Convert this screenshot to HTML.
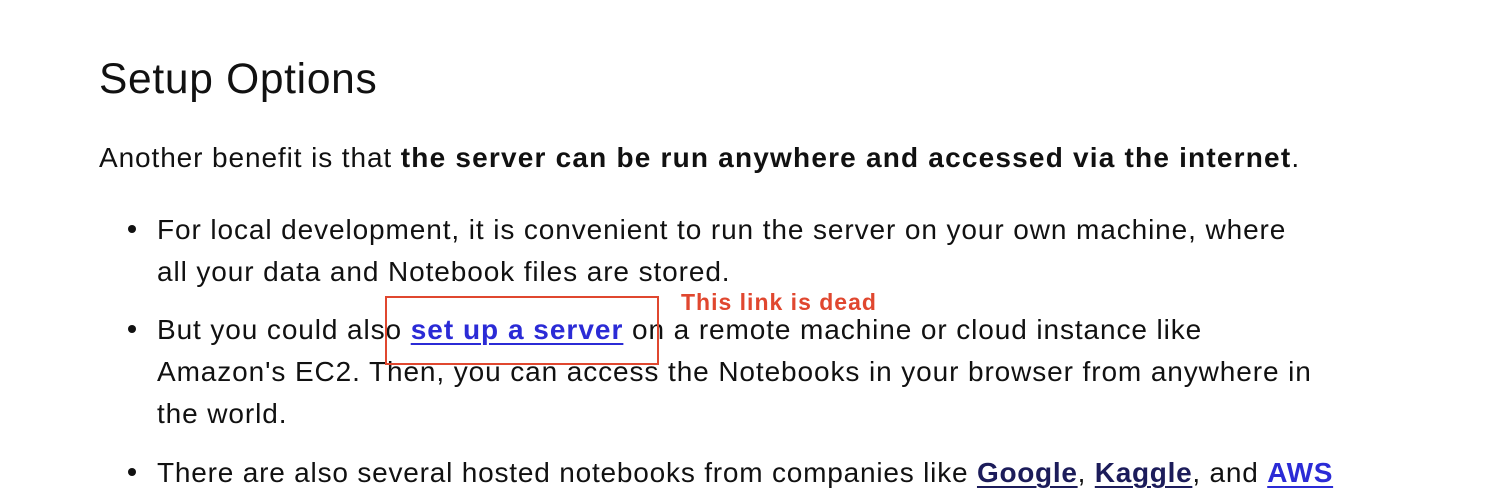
<!DOCTYPE html>
<html><head><meta charset="utf-8"><style>
html,body{margin:0;padding:0;background:#fff;width:1498px;height:500px;overflow:hidden;}
body{font-family:"Liberation Sans","DejaVu Sans",sans-serif;color:#111;}
.l{position:absolute;font-size:28px;letter-spacing:0.9px;white-space:nowrap;line-height:1;}
h1{position:absolute;left:99px;top:59px;margin:0;font-weight:400;font-size:42.5px;line-height:1;letter-spacing:0.7px;}
b{font-weight:700;letter-spacing:1.2px;}
a{font-weight:700;letter-spacing:0.7px;text-decoration:underline;text-decoration-thickness:2px;text-underline-offset:4px;}
.blue{color:#2b2bd6;}
.navy{color:#1c1c5a;}
.dot{position:absolute;width:8px;height:8px;border-radius:50%;background:#111;}
.box{position:absolute;left:385px;top:296px;width:274px;height:69px;border:2px solid #e0472f;box-sizing:border-box;}
.note{position:absolute;left:681px;top:289px;color:#e0472f;font-weight:700;font-size:23px;letter-spacing:1px;white-space:nowrap;}
</style></head><body>
<h1>Setup Options</h1>
<div class="l" style="left:99px;top:144px">Another benefit is that <b>the server can be run anywhere and accessed via the internet</b>.</div>
<div class="dot" style="left:128px;top:225px"></div>
<div class="l" style="left:157px;top:216px">For local development, it is convenient to run the server on your own machine, where</div>
<div class="l" style="left:157px;top:258px">all your data and Notebook files are stored.</div>
<div class="dot" style="left:128px;top:325px"></div>
<div class="l" style="left:157px;top:316px">But you could also <a class="blue" style="letter-spacing:1px">set up a server</a> on a remote machine or cloud instance like</div>
<div class="l" style="left:157px;top:358px">Amazon's EC2. Then, you can access the Notebooks in your browser from anywhere in</div>
<div class="l" style="left:157px;top:400px">the world.</div>
<div class="dot" style="left:128px;top:468px"></div>
<div class="l" style="left:157px;top:459px;letter-spacing:0.8px">There are also several hosted notebooks from companies like <a class="navy">Google</a>, <a class="navy">Kaggle</a>, and <a class="blue">AWS</a></div>
<div class="box"></div>
<div class="note">This link is dead</div>
</body></html>
